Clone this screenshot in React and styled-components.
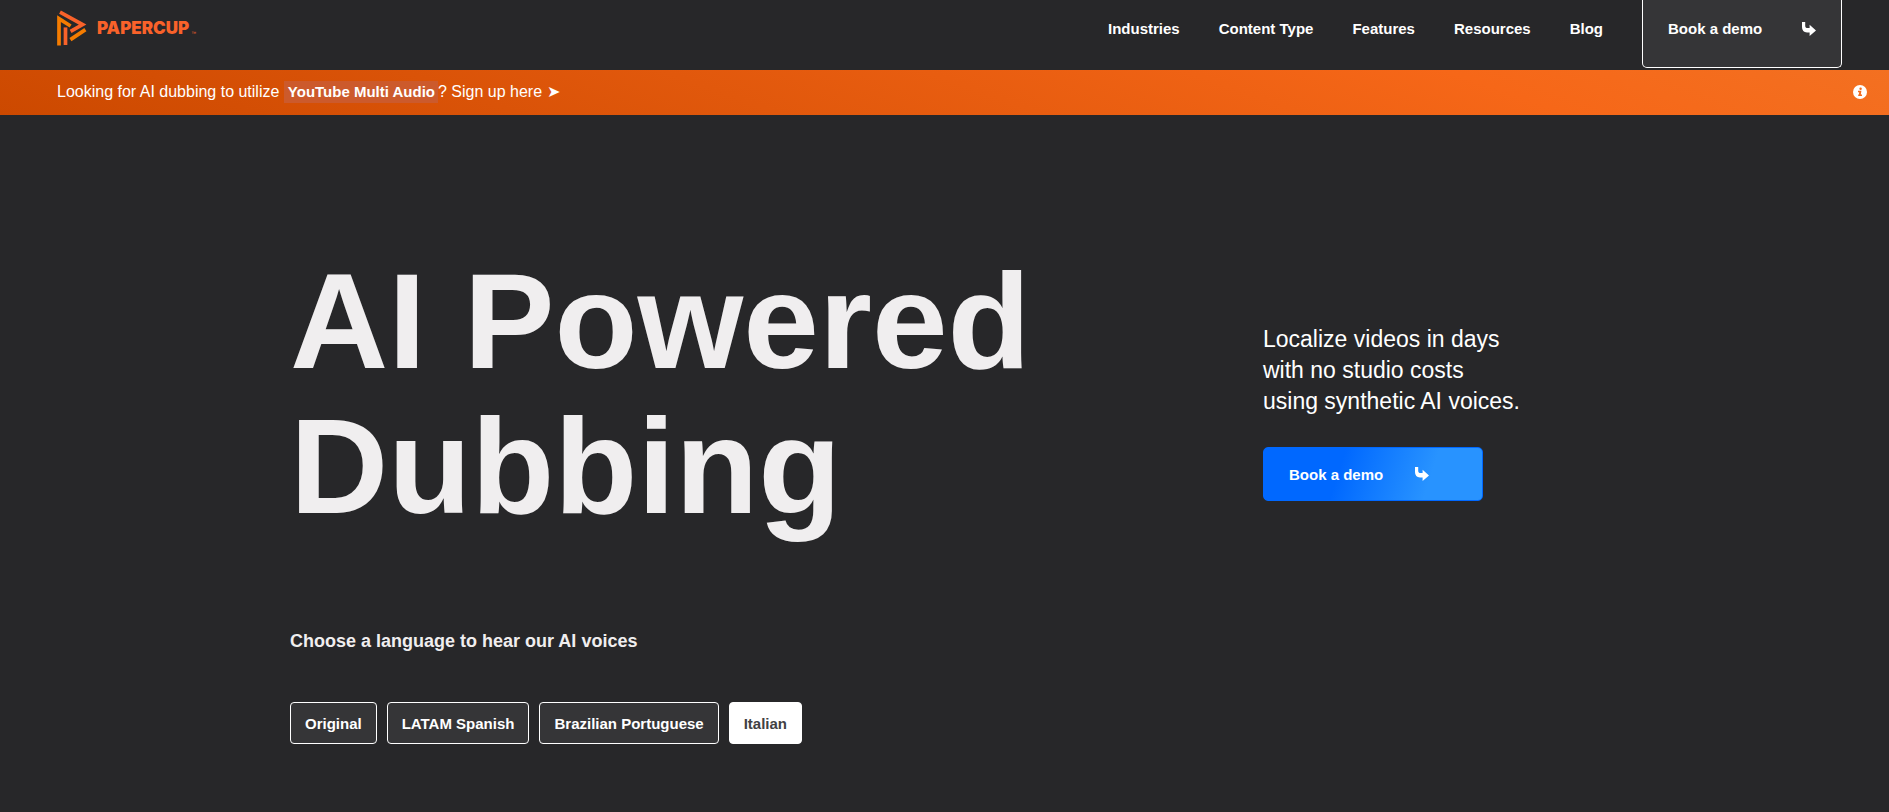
import { useState } from "react";
import styled, { createGlobalStyle } from "styled-components";

const GlobalStyle = createGlobalStyle`
  * {
    box-sizing: border-box;
  }
  body {
    margin: 0;
    background: #272729;
    color: #fff;
    font-family: "Liberation Sans", Arial, Helvetica, sans-serif;
    -webkit-font-smoothing: antialiased;
  }
`;

const Header = styled.header`
  display: flex;
  justify-content: space-between;
  align-items: flex-start;
  height: 70px;
  padding: 0 47px 0 57px;
`;

const Logo = styled.a`
  display: flex;
  align-items: center;
  gap: 10px;
  height: 56px;
  color: #f9622a;
  text-decoration: none;
`;

const Wordmark = styled.span`
  font-family: Inter, "Liberation Sans", sans-serif;
  font-size: 17px;
  font-weight: 900;
`;

const Trademark = styled.small`
  align-self: flex-end;
  margin: 0 0 20px -8px;
  font-size: 5px;
  line-height: 6px;
`;

const Nav = styled.nav`
  display: flex;
  align-items: flex-start;
  gap: 39px;
`;

const NavLink = styled.a`
  font-size: 15px;
  font-weight: bold;
  line-height: 58px;
  color: #fff;
  text-decoration: none;
`;

const DemoLink = styled.a`
  display: flex;
  justify-content: space-between;
  align-items: center;
  width: 200px;
  height: 68px;
  padding: 0 25px 10px;
  border: 1px solid #fff;
  border-top: 0;
  border-radius: 0 0 5px 5px;
  background: #353537;
  color: #fff;
  font-size: 15px;
  font-weight: bold;
  text-decoration: none;
`;

const Banner = styled.div`
  display: flex;
  justify-content: space-between;
  align-items: center;
  height: 45px;
  padding: 0 22px 2px 57px;
  background: linear-gradient(20deg, #cc4900, #f66718 78%, #f37021);
`;

const BannerLink = styled.a`
  font-size: 16px;
  line-height: 22px;
  color: #fff;
  text-decoration: none;
`;

const Highlight = styled.strong`
  display: inline-block;
  padding: 0 3px 0 4px;
  background: #cc5a2c;
  font-size: 15px;
`;

const InfoButton = styled.button`
  display: flex;
  padding: 0;
  border: 0;
  background: none;
  color: #fff;
  cursor: pointer;
`;

const Hero = styled.main`
  max-width: 1309px;
  margin: 0 auto;
  padding: 134px 0 60px;
`;

const Intro = styled.section`
  display: grid;
  grid-template-columns: 1fr 336px;
`;

const Title = styled.h1`
  margin: 0;
  color: #f0eeef;
  font-size: 136px;
  line-height: 145px;
`;

const Side = styled.div`
  padding-top: 75px;
`;

const Description = styled.p`
  margin: 0 0 30px;
  font-size: 23px;
  line-height: 31px;
`;

const PrimaryLink = styled.a`
  display: flex;
  align-items: center;
  gap: 32px;
  width: 220px;
  height: 54px;
  padding: 0 25px;
  border: 1px solid #0068ff;
  border-radius: 5px;
  background: linear-gradient(108deg, #0068ff 35%, #2893ff 75%);
  color: #fff;
  font-size: 15px;
  font-weight: bold;
  text-decoration: none;
`;

const Subtitle = styled.h2`
  margin: 90px 0 49px;
  color: #f0eeef;
  font-size: 18px;
  line-height: 24px;
`;

const Languages = styled.div`
  display: flex;
  flex-wrap: wrap;
  gap: 10px;
`;

const LanguageButton = styled.button`
  height: 42px;
  padding: 0 14px;
  border: 1px solid #fff;
  border-radius: 4px;
  background: ${({ $active }) => ($active ? "#fff" : "#353537")};
  color: ${({ $active }) => ($active ? "#414143" : "#fff")};
  font-family: inherit;
  font-size: 15px;
  font-weight: bold;
  cursor: pointer;
`;

const links = ["Industries", "Content Type", "Features", "Resources", "Blog"];
const languages = ["Original", "LATAM Spanish", "Brazilian Portuguese", "Italian"];

const LogoMark = () => (
  <svg width="30" height="36" viewBox="0 0 30 36" fill="none" strokeWidth="3.7">
    <path d="M2 35.5V8.6L13.6 16" stroke="#f57c00" />
    <path d="M3 2.2L25.6 14.6L13.6 21.4" stroke="#f9622a" />
    <path d="M8.5 35V17.4" stroke="#f9622a" />
    <path d="M13.4 29.6L28.4 19.6" stroke="#f57c00" />
  </svg>
);

const ArrowIcon = () => (
  <svg width="14" height="14" viewBox="0 0 14 14" fill="#fff">
    <path d="M0 0H3.2V3.4Q3.2 6 5.6 6H7.6V2.8L14 8.6L7.6 14V10.4H5Q0 10.4 0 5Z" />
  </svg>
);

const InfoIcon = () => (
  <svg width="14" height="14" viewBox="0 0 14 14">
    <circle cx="7" cy="7" r="7" fill="#fff" />
    <circle cx="7.6" cy="3.8" r="1.2" fill="#f26a1d" />
    <path d="M5 5.8H8.4L7.8 9.6H9V11H5.2V9.6H5.9L6.2 7.2H5Z" fill="#f26a1d" />
  </svg>
);

export default function App() {
  const [language, setLanguage] = useState("Italian");

  return (
    <>
      <GlobalStyle />
      <Header>
        <Logo href="/">
          <LogoMark />
          <Wordmark>PAPERCUP</Wordmark>
          <Trademark>™</Trademark>
        </Logo>
        <Nav>
          {links.map((link) => (
            <NavLink key={link} href="#">
              {link}
            </NavLink>
          ))}
          <DemoLink href="#">
            Book a demo
            <ArrowIcon />
          </DemoLink>
        </Nav>
      </Header>
      <Banner>
        <BannerLink href="#">
          Looking for AI dubbing to utilize{" "}
          <Highlight>YouTube Multi Audio</Highlight>? Sign up here ➤
        </BannerLink>
        <InfoButton aria-label="More information">
          <InfoIcon />
        </InfoButton>
      </Banner>
      <Hero>
        <Intro>
          <Title>
            AI Powered
            <br />
            Dubbing
          </Title>
          <Side>
            <Description>
              Localize videos in days
              <br />
              with no studio costs
              <br />
              using synthetic AI voices.
            </Description>
            <PrimaryLink href="#">
              Book a demo
              <ArrowIcon />
            </PrimaryLink>
          </Side>
        </Intro>
        <Subtitle>Choose a language to hear our AI voices</Subtitle>
        <Languages>
          {languages.map((name) => (
            <LanguageButton
              key={name}
              $active={name === language}
              aria-pressed={name === language}
              onClick={() => setLanguage(name)}
            >
              {name}
            </LanguageButton>
          ))}
        </Languages>
      </Hero>
    </>
  );
}
